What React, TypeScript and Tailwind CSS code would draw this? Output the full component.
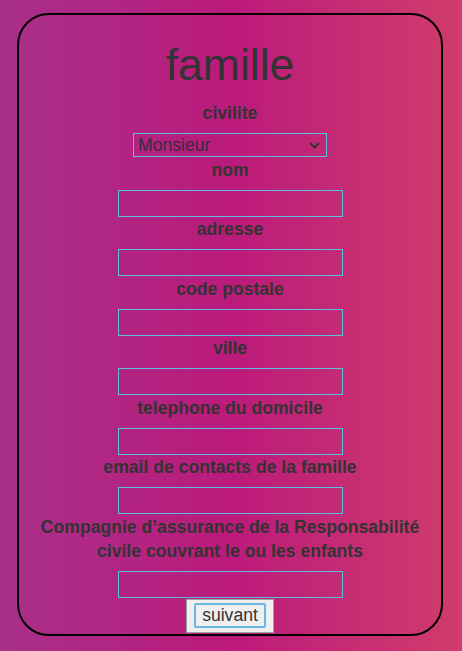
import React from "react";

const font = { fontFamily: '"Liberation Sans", Arial, sans-serif' };

function Field({ label }: { label: React.ReactNode }) {
  return (
    <>
      <div className="mt-[0.5px] text-center text-[17.6px] font-bold leading-[24px] text-[#333]">{label}</div>
      <input
        type="text"
        className="mt-[8px] h-[27px] w-[225px] shrink-0 border border-[#5bc0de] bg-transparent outline-none"
      />
    </>
  );
}

export default function App() {
  return (
    <div
      className="h-[651px] w-[462px] overflow-hidden bg-[linear-gradient(to_right,#a8308a_0%,#bb1a7b_50%,#d03c6c_100%)] pt-[13px]"
      style={font}
    >
      <div className="ml-[17px] flex h-[623px] w-[426px] flex-col items-center rounded-[32px] border-2 border-black px-[18px] pt-[25px]">
        <h1 className="text-[44.5px] font-normal leading-[50px] text-[#333]">famille</h1>
        <div className="mt-[10.5px] text-center text-[17.6px] font-bold leading-[24px] text-[#333]">civilite</div>
        <div className="relative mt-[8px] h-[24px] w-[194px] shrink-0">
          <select className="h-full w-full appearance-none border border-[#5bc0de] bg-transparent pl-[4px] text-[17.6px] leading-[20px] text-[#3a2a3a] outline-none">
            <option>Monsieur</option>
          </select>
          <svg className="pointer-events-none absolute right-[7px] top-[9px]" width="11" height="7" viewBox="0 0 11 7">
            <path d="M1 1 L5.5 5.5 L10 1" fill="none" stroke="#333" strokeWidth="2" />
          </svg>
        </div>
        <div className="h-[0.5px] shrink-0" />
        <Field label="nom" />
        <Field label="adresse" />
        <Field label="code postale" />
        <Field label="ville" />
        <Field label="telephone du domicile" />
        <Field label="email de contacts de la famille" />
        <Field
          label={
            <>
              Compagnie d’assurance de la Responsabilité
              <br />
              civile couvrant le ou les enfants
            </>
          }
        />
        <button className="mt-[1px] shrink-0 border border-[#a0a0a0] bg-[#efefef] px-[7px] py-[3.5px]">
          <span className="block rounded-[2px] border-2 border-[#6cb6e6] px-[6px] text-[17.6px] leading-[21px] text-[#333]">
            suivant
          </span>
        </button>
      </div>
    </div>
  );
}
